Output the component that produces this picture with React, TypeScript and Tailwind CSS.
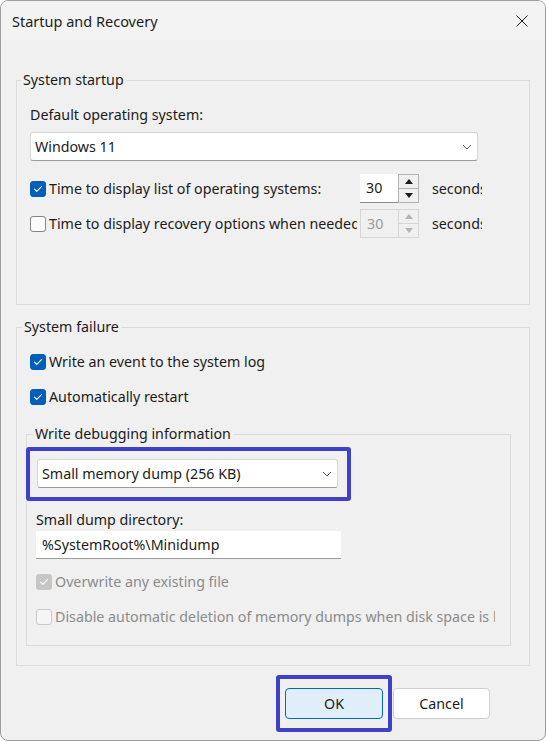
import React from "react";

const font = { fontFamily: '"Noto Sans", "Open Sans", sans-serif' };

function CheckBox({ checked, disabled }: { checked?: boolean; disabled?: boolean }) {
  let box = "bg-[#fbfbfb] border-[#858585]";
  if (checked && !disabled) box = "bg-[#005fb8] border-[#005fb8]";
  if (checked && disabled) box = "bg-[#c6c6c6] border-[#c6c6c6]";
  if (!checked && disabled) box = "bg-[#f5f5f5] border-[#cbcbcb]";
  return (
    <span className={`flex h-[16px] w-[16px] shrink-0 items-center justify-center rounded-[3px] border ${box}`}>
      {checked && (
        <svg width="10" height="8" viewBox="0 0 10 8" fill="none">
          <path d="M1.5 4.2 3.8 6.3 8.5 1.6" stroke="white" strokeWidth="1.1" strokeLinecap="round" strokeLinejoin="round" />
        </svg>
      )}
    </span>
  );
}

function Chevron() {
  return (
    <svg width="10" height="6" viewBox="0 0 10 6" fill="none">
      <path d="M1 1 5 5 9 1" stroke="#5c5c5c" strokeWidth="1" />
    </svg>
  );
}

function Combo({ value, width }: { value: string; width: string }) {
  return (
    <div className={`flex h-[29px] items-center justify-between rounded-[3px] border border-[#d6d6d6] border-b-[#9a9a9a] bg-white pl-[4px] pr-[5px] ${width}`}>
      <span>{value}</span>
      <Chevron />
    </div>
  );
}

function Spinner({ disabled }: { disabled?: boolean }) {
  const arrow = disabled ? "#b5b5b5" : "#1b1b1b";
  return (
    <div className="flex h-[29px]">
      <div
        className={`flex w-[38px] items-center pl-[6px] ${
          disabled ? "border border-r-0 border-[#d6d6d6] text-[#9a9a9a]" : "border-b border-[#8a8a8a] bg-white"
        }`}
      >
        30
      </div>
      <div className={`flex w-[21px] flex-col border ${disabled ? "border-[#d6d6d6]" : "border-[#b4b4b4]"}`}>
        <div className={`flex flex-1 items-center justify-center border-b ${disabled ? "border-[#d6d6d6]" : "border-[#b4b4b4]"}`}>
          <svg width="8" height="5" viewBox="0 0 8 5">
            <path d="M0 5 4 0 8 5Z" fill={arrow} />
          </svg>
        </div>
        <div className="flex flex-1 items-center justify-center">
          <svg width="8" height="5" viewBox="0 0 8 5">
            <path d="M0 0 4 5 8 0Z" fill={arrow} />
          </svg>
        </div>
      </div>
    </div>
  );
}

function CheckRow({ label, checked, disabled, labelWidth }: { label: string; checked?: boolean; disabled?: boolean; labelWidth?: string }) {
  return (
    <div className="flex h-[22px] items-center gap-[3px]">
      <CheckBox checked={checked} disabled={disabled} />
      <span className={`overflow-hidden whitespace-nowrap ${disabled ? "text-[#8b8b8b]" : ""} ${labelWidth ?? ""}`}>{label}</span>
    </div>
  );
}

export default function App() {
  return (
    <div
      style={font}
      className="flex h-[741px] w-[546px] flex-col overflow-hidden rounded-[8px] border border-[#9d9d9d] bg-[#f0f0f0] text-[14.25px] leading-[20px] text-[#1b1b1b]"
    >
      <div className="flex h-[39px] items-center justify-between bg-[#f3f3f3] pl-[11px] pr-[17px]">
        <span className="text-[14.5px]">Startup and Recovery</span>
        <svg width="12" height="12" viewBox="0 0 12 12">
          <path d="M0.5 0.5 11.5 11.5M11.5 0.5 0.5 11.5" stroke="#1b1b1b" strokeWidth="1" />
        </svg>
      </div>

      <div className="px-[15px]">
        <fieldset className="mt-[30px] border border-[#dcdcdc]">
          <legend className="ml-[4px] px-[2px]">System startup</legend>
          <div className="pb-[66px] pl-[13px] pt-[15px]">
            <div>Default operating system:</div>
            <div className="mt-[7px]">
              <Combo value="Windows 11" width="w-[448px]" />
            </div>
            <div className="mt-[13px] flex items-center">
              <div className="flex items-center gap-[3px]">
                <CheckBox checked />
                <span className="w-[308px] overflow-hidden whitespace-nowrap">Time to display list of operating systems:</span>
              </div>
              <div className="ml-[3px]">
                <Spinner />
              </div>
              <span className="ml-[13px] w-[50px] overflow-hidden whitespace-nowrap">seconds</span>
            </div>
            <div className="mt-[6px] flex items-center">
              <div className="flex items-center gap-[3px]">
                <CheckBox />
                <span className="w-[308px] overflow-hidden whitespace-nowrap">Time to display recovery options when needed:</span>
              </div>
              <div className="ml-[3px]">
                <Spinner disabled />
              </div>
              <span className="ml-[13px] w-[50px] overflow-hidden whitespace-nowrap">seconds</span>
            </div>
          </div>
        </fieldset>

        <fieldset className="mt-[12px] border border-[#dcdcdc]">
          <legend className="ml-[5px] px-[2px]">System failure</legend>
          <div className="pl-[13px] pt-[14px]">
            <CheckRow checked label="Write an event to the system log" />
            <div className="mt-[13px]">
              <CheckRow checked label="Automatically restart" />
            </div>
          </div>

          <fieldset className="mb-[19px] ml-[9px] mr-[18px] mt-[16px] border border-[#dcdcdc]">
            <legend className="ml-[6px] px-[2px]">Write debugging information</legend>
            <div className="pb-[17px]">
              <div className="-ml-[1px] mt-[3px] w-[325px] rounded-[3px] border-[4px] border-[#4040c8] pb-[9px] pl-[7px] pr-[9px] pt-[8px]">
                <Combo value="Small memory dump (256 KB)" width="w-[301px]" />
              </div>
              <div className="pl-[9px]">
                <div className="mt-[9px]">Small dump directory:</div>
                <div className="mt-[1px] flex h-[28px] w-[305px] items-center border-b border-[#9a9a9a] bg-white pl-[6px]">
                  %SystemRoot%\Minidump
                </div>
                <div className="mt-[12px]">
                  <CheckRow checked disabled label="Overwrite any existing file" />
                </div>
                <div className="mt-[13px]">
                  <CheckRow disabled label="Disable automatic deletion of memory dumps when disk space is low" labelWidth="w-[440px]" />
                </div>
              </div>
            </div>
          </fieldset>
        </fieldset>

        <div className="mt-[9px] flex items-center justify-end pr-[40px]">
          <div className="rounded-[3px] border-[4px] border-[#4040c8] px-[5px] py-[9px]">
            <button className="h-[31px] w-[98px] rounded-[4px] border border-[#0067c0] bg-[#e0eef9]">OK</button>
          </div>
          <button className="ml-[1px] h-[31px] w-[97px] rounded-[4px] border border-[#d0d0d0] bg-white">Cancel</button>
        </div>
      </div>
    </div>
  );
}
